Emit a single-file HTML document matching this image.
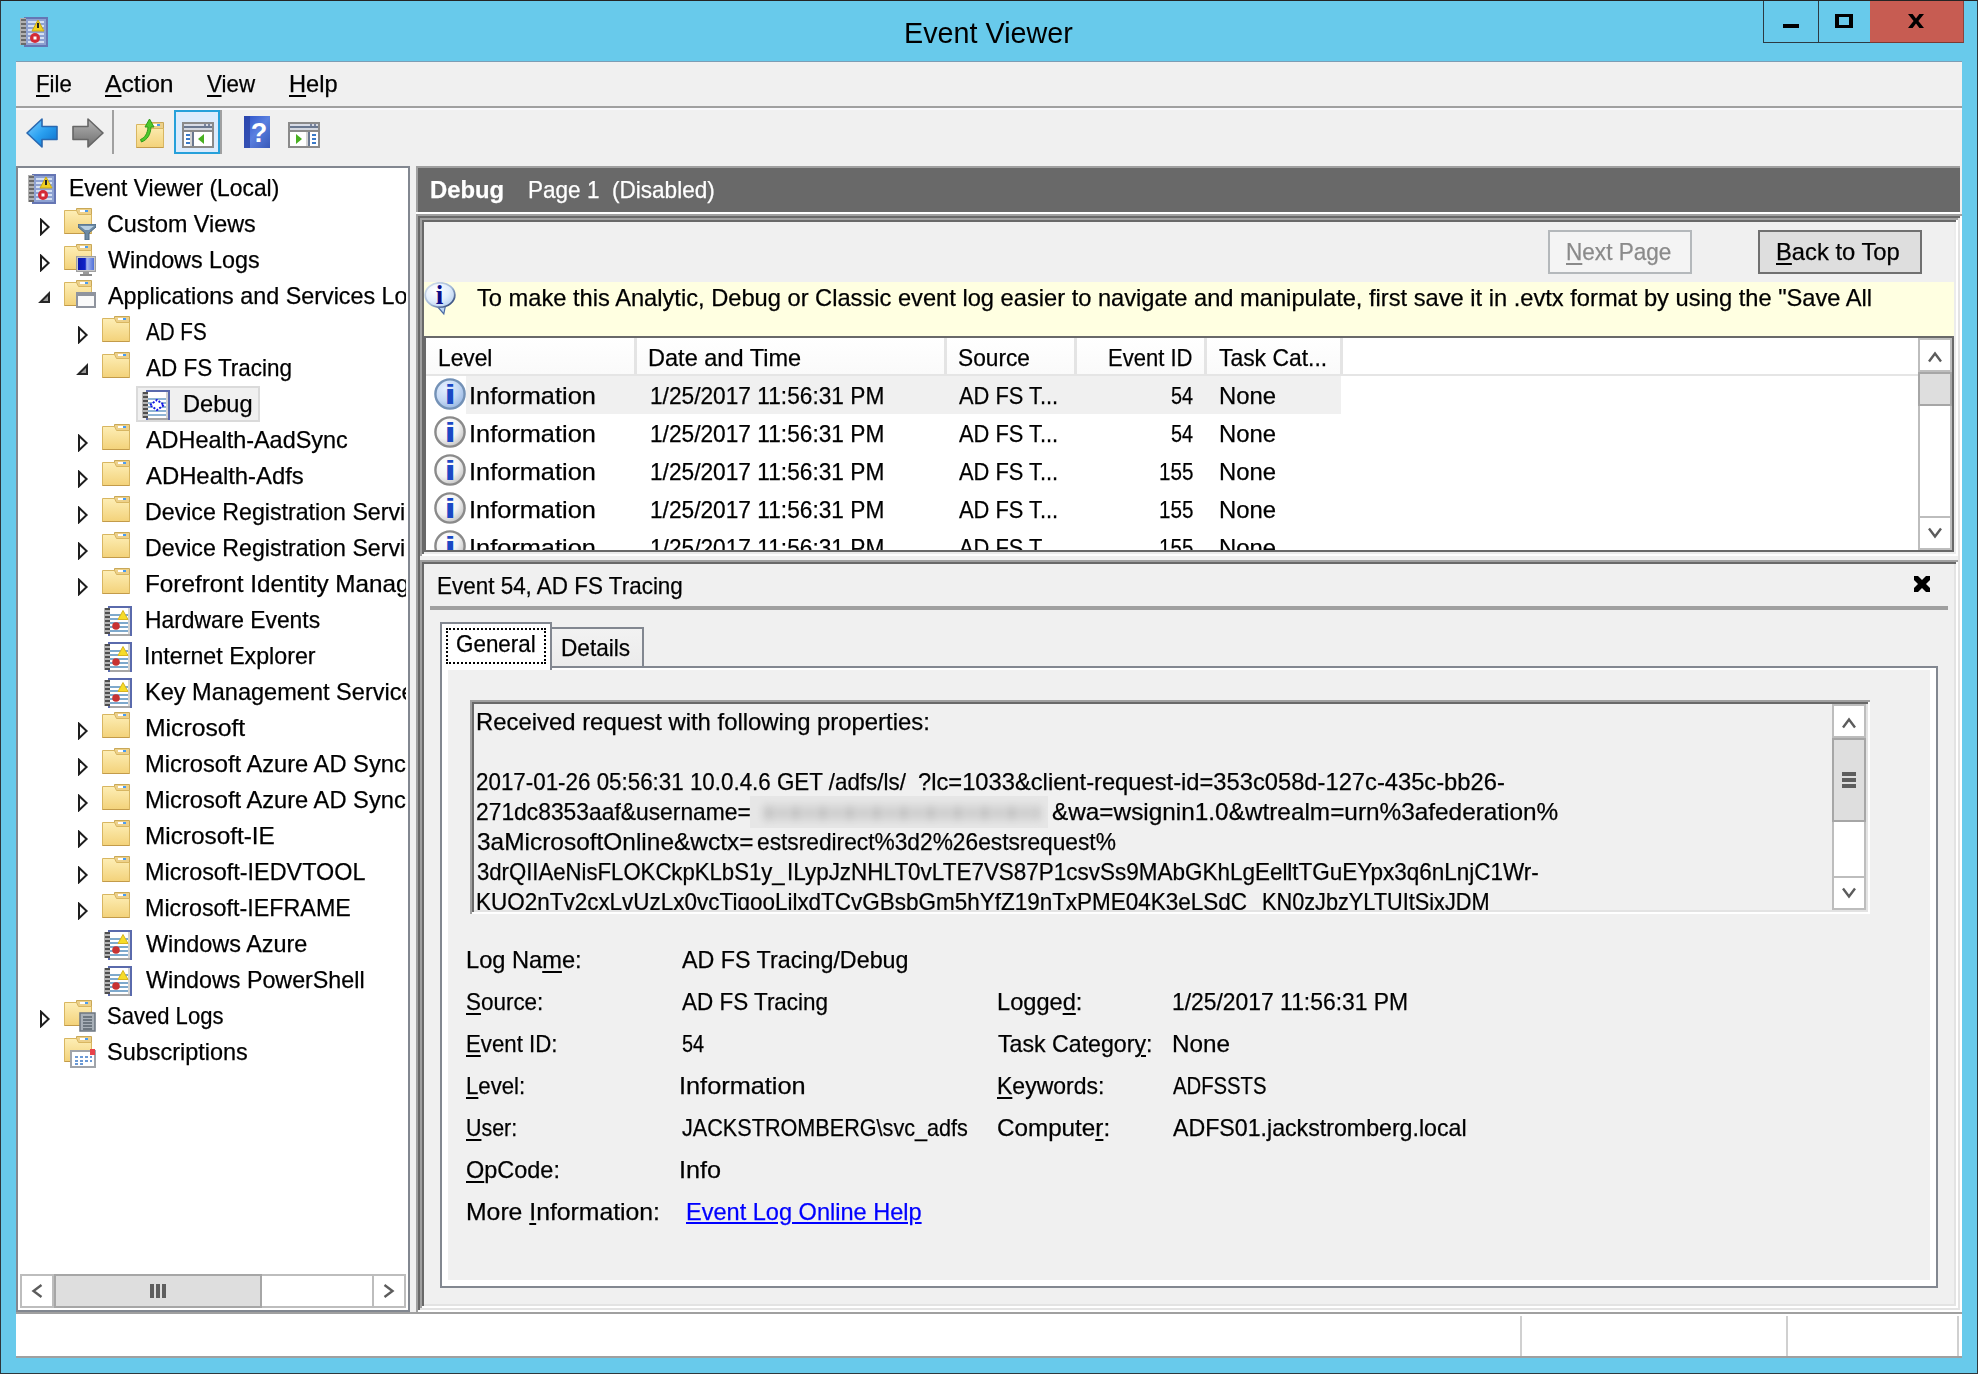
<!DOCTYPE html>
<html lang="en"><head><meta charset="utf-8"><title>Event Viewer</title>
<style>
html,body{margin:0;padding:0}
body{width:1978px;height:1374px;position:relative;overflow:hidden;background:#68caeb;font-family:"Liberation Sans", sans-serif;}
body div,body span.t,body svg{position:absolute;box-sizing:border-box}
span.t{white-space:pre;transform-origin:0 0;color:#000;-webkit-text-stroke:0.25px currentColor}
u{text-decoration:underline;text-decoration-thickness:2px;text-underline-offset:2.5px}
</style></head>
<body>
<svg width="0" height="0" style="left:0;top:0"><linearGradient id="gf" x1="0" y1="0" x2="0" y2="1"><stop offset="0" stop-color="#fdeeb6"/><stop offset="1" stop-color="#f3d27a"/></linearGradient>
<linearGradient id="gb" x1="0" y1="0" x2="1" y2="1"><stop offset="0" stop-color="#7fd0ff"/><stop offset="0.5" stop-color="#2aa0f0"/><stop offset="1" stop-color="#0a6cc8"/></linearGradient>
<linearGradient id="gg" x1="0" y1="0" x2="0" y2="1"><stop offset="0" stop-color="#b4b4b4"/><stop offset="1" stop-color="#6e6e6e"/></linearGradient>
<radialGradient id="gi" cx="0.35" cy="0.3" r="0.8"><stop offset="0" stop-color="#ffffff"/><stop offset="0.55" stop-color="#f2f2f2"/><stop offset="1" stop-color="#bdbdbd"/></radialGradient>
<radialGradient id="gis" cx="0.35" cy="0.3" r="0.8"><stop offset="0" stop-color="#e4efff"/><stop offset="0.55" stop-color="#c4d8f4"/><stop offset="1" stop-color="#8fb0de"/></radialGradient>
<linearGradient id="gh" x1="0" y1="0" x2="1" y2="1"><stop offset="0" stop-color="#2a50c8"/><stop offset="0.5" stop-color="#5a80e0"/><stop offset="1" stop-color="#3858b8"/></linearGradient>
<linearGradient id="gm" x1="0" y1="0" x2="1" y2="0"><stop offset="0" stop-color="#0a18b0"/><stop offset="0.45" stop-color="#1024c8"/><stop offset="0.55" stop-color="#a8b8f0"/><stop offset="1" stop-color="#5070d8"/></linearGradient></svg>
<div style="left:0;top:0;width:1978px;height:1374px;border:1px solid #2d373c;border-top-color:#242424"></div>
<div style="left:16px;top:61px;width:1946px;height:1px;background:#7d9db4;"></div>
<div style="left:16px;top:62px;width:1946px;height:1296px;background:#f0f0f0;"></div>
<svg style="left:20px;top:17px;" width="28" height="30" viewBox="0 0 28 30"><rect x="4" y="0" width="24" height="30" fill="#6576b4"/><rect x="6" y="2" width="20" height="26" fill="#8ea2d2"/>
<path d="M8 5h16M8 9h16M8 13h16M8 17h16M8 21h16M8 25h16" stroke="#d4e0f2" stroke-width="2"/>
<path d="M0 1h6v27h-6z" fill="#b0b0b0"/><path d="M1 3h5M1 7h5M1 11h5M1 15h5M1 19h5M1 23h5M1 27h5" stroke="#6a6a6a" stroke-width="2"/>
<path d="M18 3l-6 11h12z" fill="#f0d020" stroke="#c8a818"/><rect x="17" y="6" width="2" height="5" fill="#222"/>
<circle cx="15" cy="21" r="5" fill="#d42a36"/><rect x="13.5" y="19.5" width="3" height="3" fill="#fff"/></svg>
<div style="left:1763px;top:1px;width:56px;height:42px;border-left:1px solid #2c3a42;border-bottom:1px solid #2c3a42;border-right:1px solid #2c3a42;"></div>
<div style="left:1818px;top:1px;width:52px;height:42px;border-bottom:1px solid #2c3a42;"></div>
<div style="left:1870px;top:1px;width:94px;height:42px;background:#c75c52;border-bottom:1px solid #7a3a33;border-right:1px solid #8a443c;"></div>
<div style="left:1783px;top:24px;width:16px;height:4px;background:#000;"></div>
<div style="left:1835px;top:14px;width:18px;height:14px;border:3px solid #000;border-left-width:4px;border-right-width:4px;"></div>
<svg style="left:1908px;top:14px;" width="16" height="14" viewBox="0 0 16 14"><path d="M0 0h4.600L8 4.500 11.400 0H16l-5.600 7 5.600 7h-4.600L8 9.500 4.600 14H0l5.600-7z" fill="#000"/></svg>
<div style="left:16px;top:106px;width:1946px;height:2px;background:#a0a0a0;"></div>
<div style="left:16px;top:108px;width:1946px;height:2px;background:#f9f9fc;"></div>
<svg style="left:26px;top:118px;" width="32" height="30" viewBox="0 0 32 30"><path d="M1 15L16 1v7.5h15v13H16V29z" fill="url(#gb)" stroke="#2a68b0" stroke-width="1.6" stroke-linejoin="round"/></svg>
<svg style="left:72px;top:118px;" width="32" height="30" viewBox="0 0 32 30"><path d="M31 15L16 1v7.5H1v13h15V29z" fill="url(#gg)" stroke="#666" stroke-width="1.6" stroke-linejoin="round"/></svg>
<div style="left:112px;top:110px;width:2px;height:44px;background:#a0a0a0;"></div>
<svg style="left:136px;top:118px;" width="28" height="30" viewBox="0 0 28 30"><g transform="translate(0,4)"><path d="M12.5 0.5h15v7h-15z" fill="#ecd08a" stroke="#c9a857"/><rect x="16" y="2" width="5" height="2" fill="#fff"/><rect x="21" y="2" width="3" height="2" fill="#4a9cf0"/>
<path d="M0.5 2.5h12l2 4h13v19h-27z" fill="url(#gf)" stroke="#d8b661"/><path d="M0.5 25.5h27" stroke="#c39b4a"/></g><path d="M4.500 21.500c4.500-2 7-6 7.500-12.500h-3L13.500 1 18 9h-3c-.5 8-3.500 12.500-9.500 15z" fill="#4cc82c" stroke="#2f9a1a" stroke-width="1"/></svg>
<div style="left:174px;top:110px;width:46px;height:44px;background:#dcebfc;border:2px solid #26a0da;"></div>
<div style="left:220px;top:110px;width:2px;height:44px;background:#a0a0a0;"></div>
<svg style="left:182px;top:122px;" width="32" height="26" viewBox="0 0 32 26"><rect x="1" y="1" width="30" height="24" fill="#fff" stroke="#8a8a8a" stroke-width="2"/><rect x="2" y="2" width="28" height="2" fill="#d8dce6"/><rect x="22" y="2" width="2" height="2" fill="#7a86a0"/><rect x="26" y="2" width="2" height="2" fill="#7a86a0"/><rect x="2" y="4" width="28" height="2" fill="#6a7890"/><rect x="2" y="6" width="28" height="2" fill="#d4d8e0"/><rect x="2" y="8" width="28" height="2" fill="#8a8a8a"/><rect x="4" y="12" width="4" height="2" fill="#3a7ac8"/><rect x="4" y="16" width="4" height="2" fill="#3a7ac8"/><rect x="4" y="20" width="4" height="2" fill="#3a7ac8"/><rect x="8" y="10" width="2" height="14" fill="#d4d4d4"/><rect x="10" y="10" width="2" height="14" fill="#6a7890"/><path d="M22 12v10l-6-5z" fill="#48b020"/></svg>
<svg style="left:244px;top:116px;" width="26" height="32" viewBox="0 0 26 32"><rect width="26" height="32" fill="url(#gh)"/><rect x="0" y="0" width="6" height="32" fill="#2a44a8" opacity="0.8"/><text x="15" y="26" text-anchor="middle" font-family="Liberation Sans, sans-serif" font-weight="bold" font-size="27" fill="#fff">?</text></svg>
<svg style="left:288px;top:122px;" width="32" height="26" viewBox="0 0 32 26"><rect x="1" y="1" width="30" height="24" fill="#fff" stroke="#8a8a8a" stroke-width="2"/><rect x="2" y="2" width="28" height="2" fill="#d8dce6"/><rect x="22" y="2" width="2" height="2" fill="#7a86a0"/><rect x="26" y="2" width="2" height="2" fill="#7a86a0"/><rect x="2" y="4" width="28" height="2" fill="#6a7890"/><rect x="2" y="6" width="28" height="2" fill="#d4d8e0"/><rect x="2" y="8" width="28" height="2" fill="#8a8a8a"/><rect x="24" y="12" width="4" height="2" fill="#3a7ac8"/><rect x="24" y="16" width="4" height="2" fill="#3a7ac8"/><rect x="24" y="20" width="4" height="2" fill="#3a7ac8"/><rect x="18" y="10" width="2" height="14" fill="#d4d4d4"/><rect x="20" y="10" width="2" height="14" fill="#6a7890"/><path d="M8 12v10l6-5z" fill="#48b020"/></svg>
<div style="left:16px;top:166px;width:394px;height:1146px;background:#fff;border:2px solid #828790;"></div>
<div style="left:136px;top:386px;width:124px;height:36px;background:#f0f0f0;border:2px solid #dadada;"></div>
<svg style="left:28px;top:174px;" width="28" height="30" viewBox="0 0 28 30"><rect x="4" y="0" width="24" height="30" fill="#6576b4"/><rect x="6" y="2" width="20" height="26" fill="#8ea2d2"/>
<path d="M8 5h16M8 9h16M8 13h16M8 17h16M8 21h16M8 25h16" stroke="#d4e0f2" stroke-width="2"/>
<path d="M0 1h6v27h-6z" fill="#b0b0b0"/><path d="M1 3h5M1 7h5M1 11h5M1 15h5M1 19h5M1 23h5M1 27h5" stroke="#6a6a6a" stroke-width="2"/>
<path d="M18 3l-6 11h12z" fill="#f0d020" stroke="#c8a818"/><rect x="17" y="6" width="2" height="5" fill="#222"/>
<circle cx="15" cy="21" r="5" fill="#d42a36"/><rect x="13.5" y="19.5" width="3" height="3" fill="#fff"/></svg>
<svg style="left:64px;top:208px;" width="28" height="26" viewBox="0 0 28 26"><path d="M12.5 0.5h15v7h-15z" fill="#ecd08a" stroke="#c9a857"/><rect x="16" y="2" width="5" height="2" fill="#fff"/><rect x="21" y="2" width="3" height="2" fill="#4a9cf0"/>
<path d="M0.5 2.5h12l2 4h13v19h-27z" fill="url(#gf)" stroke="#d8b661"/><path d="M0.5 25.5h27" stroke="#c39b4a"/></svg>
<svg style="left:40px;top:218px;" width="11" height="18" viewBox="0 0 11 18"><path d="M1 1.8l7.6 7.2-7.6 7.200z" fill="#fff" stroke="#1e1e1e" stroke-width="2" stroke-linejoin="miter"/></svg>
<svg style="left:64px;top:244px;" width="28" height="26" viewBox="0 0 28 26"><path d="M12.5 0.5h15v7h-15z" fill="#ecd08a" stroke="#c9a857"/><rect x="16" y="2" width="5" height="2" fill="#fff"/><rect x="21" y="2" width="3" height="2" fill="#4a9cf0"/>
<path d="M0.5 2.5h12l2 4h13v19h-27z" fill="url(#gf)" stroke="#d8b661"/><path d="M0.5 25.5h27" stroke="#c39b4a"/></svg>
<svg style="left:40px;top:254px;" width="11" height="18" viewBox="0 0 11 18"><path d="M1 1.8l7.6 7.2-7.6 7.200z" fill="#fff" stroke="#1e1e1e" stroke-width="2" stroke-linejoin="miter"/></svg>
<svg style="left:64px;top:280px;" width="28" height="26" viewBox="0 0 28 26"><path d="M12.5 0.5h15v7h-15z" fill="#ecd08a" stroke="#c9a857"/><rect x="16" y="2" width="5" height="2" fill="#fff"/><rect x="21" y="2" width="3" height="2" fill="#4a9cf0"/>
<path d="M0.5 2.5h12l2 4h13v19h-27z" fill="url(#gf)" stroke="#d8b661"/><path d="M0.5 25.5h27" stroke="#c39b4a"/></svg>
<svg style="left:38px;top:291px;" width="12" height="12" viewBox="0 0 12 12"><path d="M11 2.500v8.500h-8.500z" fill="#9c9c9c" stroke="#262626" stroke-width="2"/></svg>
<svg style="left:102px;top:316px;" width="28" height="26" viewBox="0 0 28 26"><path d="M12.5 0.5h15v7h-15z" fill="#ecd08a" stroke="#c9a857"/><rect x="16" y="2" width="5" height="2" fill="#fff"/><rect x="21" y="2" width="3" height="2" fill="#4a9cf0"/>
<path d="M0.5 2.5h12l2 4h13v19h-27z" fill="url(#gf)" stroke="#d8b661"/><path d="M0.5 25.5h27" stroke="#c39b4a"/></svg>
<svg style="left:78px;top:326px;" width="11" height="18" viewBox="0 0 11 18"><path d="M1 1.8l7.6 7.2-7.6 7.200z" fill="#fff" stroke="#1e1e1e" stroke-width="2" stroke-linejoin="miter"/></svg>
<svg style="left:102px;top:352px;" width="28" height="26" viewBox="0 0 28 26"><path d="M12.5 0.5h15v7h-15z" fill="#ecd08a" stroke="#c9a857"/><rect x="16" y="2" width="5" height="2" fill="#fff"/><rect x="21" y="2" width="3" height="2" fill="#4a9cf0"/>
<path d="M0.5 2.5h12l2 4h13v19h-27z" fill="url(#gf)" stroke="#d8b661"/><path d="M0.5 25.5h27" stroke="#c39b4a"/></svg>
<svg style="left:76px;top:363px;" width="12" height="12" viewBox="0 0 12 12"><path d="M11 2.500v8.500h-8.500z" fill="#9c9c9c" stroke="#262626" stroke-width="2"/></svg>
<svg style="left:142px;top:390px;" width="28" height="30" viewBox="0 0 28 30"><rect x="4" y="0" width="24" height="30" fill="#5a6aac"/><rect x="6" y="2" width="22" height="28" fill="#a6a6a6"/><rect x="6" y="2" width="20" height="26" fill="#fff"/><rect x="24" y="2" width="2" height="26" fill="#d2d2d2"/><rect x="26" y="0" width="2" height="30" fill="#5a6aac"/>
<path d="M6 9h18M6 13h18M6 17h18M6 21h18M6 25h18" stroke="#8fb4d4" stroke-width="2"/>
<path d="M0 2h6v26h-6z" fill="#b4b4b4"/><path d="M1 3h5M1 7h5M1 11h5M1 15h5M1 19h5M1 23h5M1 27h5" stroke="#4e4e4e" stroke-width="2"/>
<path d="M8 15l7-5 7 5-7 5z" fill="#fff" stroke="#1414e6" stroke-width="2" stroke-dasharray="2 1.5"/></svg>
<svg style="left:102px;top:424px;" width="28" height="26" viewBox="0 0 28 26"><path d="M12.5 0.5h15v7h-15z" fill="#ecd08a" stroke="#c9a857"/><rect x="16" y="2" width="5" height="2" fill="#fff"/><rect x="21" y="2" width="3" height="2" fill="#4a9cf0"/>
<path d="M0.5 2.5h12l2 4h13v19h-27z" fill="url(#gf)" stroke="#d8b661"/><path d="M0.5 25.5h27" stroke="#c39b4a"/></svg>
<svg style="left:78px;top:434px;" width="11" height="18" viewBox="0 0 11 18"><path d="M1 1.8l7.6 7.2-7.6 7.200z" fill="#fff" stroke="#1e1e1e" stroke-width="2" stroke-linejoin="miter"/></svg>
<svg style="left:102px;top:460px;" width="28" height="26" viewBox="0 0 28 26"><path d="M12.5 0.5h15v7h-15z" fill="#ecd08a" stroke="#c9a857"/><rect x="16" y="2" width="5" height="2" fill="#fff"/><rect x="21" y="2" width="3" height="2" fill="#4a9cf0"/>
<path d="M0.5 2.5h12l2 4h13v19h-27z" fill="url(#gf)" stroke="#d8b661"/><path d="M0.5 25.5h27" stroke="#c39b4a"/></svg>
<svg style="left:78px;top:470px;" width="11" height="18" viewBox="0 0 11 18"><path d="M1 1.8l7.6 7.2-7.6 7.200z" fill="#fff" stroke="#1e1e1e" stroke-width="2" stroke-linejoin="miter"/></svg>
<svg style="left:102px;top:496px;" width="28" height="26" viewBox="0 0 28 26"><path d="M12.5 0.5h15v7h-15z" fill="#ecd08a" stroke="#c9a857"/><rect x="16" y="2" width="5" height="2" fill="#fff"/><rect x="21" y="2" width="3" height="2" fill="#4a9cf0"/>
<path d="M0.5 2.5h12l2 4h13v19h-27z" fill="url(#gf)" stroke="#d8b661"/><path d="M0.5 25.5h27" stroke="#c39b4a"/></svg>
<svg style="left:78px;top:506px;" width="11" height="18" viewBox="0 0 11 18"><path d="M1 1.8l7.6 7.2-7.6 7.200z" fill="#fff" stroke="#1e1e1e" stroke-width="2" stroke-linejoin="miter"/></svg>
<svg style="left:102px;top:532px;" width="28" height="26" viewBox="0 0 28 26"><path d="M12.5 0.5h15v7h-15z" fill="#ecd08a" stroke="#c9a857"/><rect x="16" y="2" width="5" height="2" fill="#fff"/><rect x="21" y="2" width="3" height="2" fill="#4a9cf0"/>
<path d="M0.5 2.5h12l2 4h13v19h-27z" fill="url(#gf)" stroke="#d8b661"/><path d="M0.5 25.5h27" stroke="#c39b4a"/></svg>
<svg style="left:78px;top:542px;" width="11" height="18" viewBox="0 0 11 18"><path d="M1 1.8l7.6 7.2-7.6 7.200z" fill="#fff" stroke="#1e1e1e" stroke-width="2" stroke-linejoin="miter"/></svg>
<svg style="left:102px;top:568px;" width="28" height="26" viewBox="0 0 28 26"><path d="M12.5 0.5h15v7h-15z" fill="#ecd08a" stroke="#c9a857"/><rect x="16" y="2" width="5" height="2" fill="#fff"/><rect x="21" y="2" width="3" height="2" fill="#4a9cf0"/>
<path d="M0.5 2.5h12l2 4h13v19h-27z" fill="url(#gf)" stroke="#d8b661"/><path d="M0.5 25.5h27" stroke="#c39b4a"/></svg>
<svg style="left:78px;top:578px;" width="11" height="18" viewBox="0 0 11 18"><path d="M1 1.8l7.6 7.2-7.6 7.200z" fill="#fff" stroke="#1e1e1e" stroke-width="2" stroke-linejoin="miter"/></svg>
<svg style="left:104px;top:606px;" width="28" height="30" viewBox="0 0 28 30"><rect x="4" y="0" width="24" height="30" fill="#5a6aac"/><rect x="6" y="2" width="22" height="28" fill="#a6a6a6"/><rect x="6" y="2" width="20" height="26" fill="#fff"/><rect x="24" y="2" width="2" height="26" fill="#d2d2d2"/><rect x="26" y="0" width="2" height="30" fill="#5a6aac"/>
<path d="M6 9h18M6 13h18M6 17h18M6 21h18M6 25h18" stroke="#7ea9cc" stroke-width="2"/>
<path d="M0 2h6v26h-6z" fill="#b4b4b4"/><path d="M1 3h5M1 7h5M1 11h5M1 15h5M1 19h5M1 23h5M1 27h5" stroke="#4e4e4e" stroke-width="2"/>
<path d="M19 4.500l-5 9h10z" fill="#f6dc28" stroke="#d8b41e"/><circle cx="12" cy="20" r="3.800" fill="#c83232"/></svg>
<svg style="left:104px;top:642px;" width="28" height="30" viewBox="0 0 28 30"><rect x="4" y="0" width="24" height="30" fill="#5a6aac"/><rect x="6" y="2" width="22" height="28" fill="#a6a6a6"/><rect x="6" y="2" width="20" height="26" fill="#fff"/><rect x="24" y="2" width="2" height="26" fill="#d2d2d2"/><rect x="26" y="0" width="2" height="30" fill="#5a6aac"/>
<path d="M6 9h18M6 13h18M6 17h18M6 21h18M6 25h18" stroke="#7ea9cc" stroke-width="2"/>
<path d="M0 2h6v26h-6z" fill="#b4b4b4"/><path d="M1 3h5M1 7h5M1 11h5M1 15h5M1 19h5M1 23h5M1 27h5" stroke="#4e4e4e" stroke-width="2"/>
<path d="M19 4.500l-5 9h10z" fill="#f6dc28" stroke="#d8b41e"/><circle cx="12" cy="20" r="3.800" fill="#c83232"/></svg>
<svg style="left:104px;top:678px;" width="28" height="30" viewBox="0 0 28 30"><rect x="4" y="0" width="24" height="30" fill="#5a6aac"/><rect x="6" y="2" width="22" height="28" fill="#a6a6a6"/><rect x="6" y="2" width="20" height="26" fill="#fff"/><rect x="24" y="2" width="2" height="26" fill="#d2d2d2"/><rect x="26" y="0" width="2" height="30" fill="#5a6aac"/>
<path d="M6 9h18M6 13h18M6 17h18M6 21h18M6 25h18" stroke="#7ea9cc" stroke-width="2"/>
<path d="M0 2h6v26h-6z" fill="#b4b4b4"/><path d="M1 3h5M1 7h5M1 11h5M1 15h5M1 19h5M1 23h5M1 27h5" stroke="#4e4e4e" stroke-width="2"/>
<path d="M19 4.500l-5 9h10z" fill="#f6dc28" stroke="#d8b41e"/><circle cx="12" cy="20" r="3.800" fill="#c83232"/></svg>
<svg style="left:102px;top:712px;" width="28" height="26" viewBox="0 0 28 26"><path d="M12.5 0.5h15v7h-15z" fill="#ecd08a" stroke="#c9a857"/><rect x="16" y="2" width="5" height="2" fill="#fff"/><rect x="21" y="2" width="3" height="2" fill="#4a9cf0"/>
<path d="M0.5 2.5h12l2 4h13v19h-27z" fill="url(#gf)" stroke="#d8b661"/><path d="M0.5 25.5h27" stroke="#c39b4a"/></svg>
<svg style="left:78px;top:722px;" width="11" height="18" viewBox="0 0 11 18"><path d="M1 1.8l7.6 7.2-7.6 7.200z" fill="#fff" stroke="#1e1e1e" stroke-width="2" stroke-linejoin="miter"/></svg>
<svg style="left:102px;top:748px;" width="28" height="26" viewBox="0 0 28 26"><path d="M12.5 0.5h15v7h-15z" fill="#ecd08a" stroke="#c9a857"/><rect x="16" y="2" width="5" height="2" fill="#fff"/><rect x="21" y="2" width="3" height="2" fill="#4a9cf0"/>
<path d="M0.5 2.5h12l2 4h13v19h-27z" fill="url(#gf)" stroke="#d8b661"/><path d="M0.5 25.5h27" stroke="#c39b4a"/></svg>
<svg style="left:78px;top:758px;" width="11" height="18" viewBox="0 0 11 18"><path d="M1 1.8l7.6 7.2-7.6 7.200z" fill="#fff" stroke="#1e1e1e" stroke-width="2" stroke-linejoin="miter"/></svg>
<svg style="left:102px;top:784px;" width="28" height="26" viewBox="0 0 28 26"><path d="M12.5 0.5h15v7h-15z" fill="#ecd08a" stroke="#c9a857"/><rect x="16" y="2" width="5" height="2" fill="#fff"/><rect x="21" y="2" width="3" height="2" fill="#4a9cf0"/>
<path d="M0.5 2.5h12l2 4h13v19h-27z" fill="url(#gf)" stroke="#d8b661"/><path d="M0.5 25.5h27" stroke="#c39b4a"/></svg>
<svg style="left:78px;top:794px;" width="11" height="18" viewBox="0 0 11 18"><path d="M1 1.8l7.6 7.2-7.6 7.200z" fill="#fff" stroke="#1e1e1e" stroke-width="2" stroke-linejoin="miter"/></svg>
<svg style="left:102px;top:820px;" width="28" height="26" viewBox="0 0 28 26"><path d="M12.5 0.5h15v7h-15z" fill="#ecd08a" stroke="#c9a857"/><rect x="16" y="2" width="5" height="2" fill="#fff"/><rect x="21" y="2" width="3" height="2" fill="#4a9cf0"/>
<path d="M0.5 2.5h12l2 4h13v19h-27z" fill="url(#gf)" stroke="#d8b661"/><path d="M0.5 25.5h27" stroke="#c39b4a"/></svg>
<svg style="left:78px;top:830px;" width="11" height="18" viewBox="0 0 11 18"><path d="M1 1.8l7.6 7.2-7.6 7.200z" fill="#fff" stroke="#1e1e1e" stroke-width="2" stroke-linejoin="miter"/></svg>
<svg style="left:102px;top:856px;" width="28" height="26" viewBox="0 0 28 26"><path d="M12.5 0.5h15v7h-15z" fill="#ecd08a" stroke="#c9a857"/><rect x="16" y="2" width="5" height="2" fill="#fff"/><rect x="21" y="2" width="3" height="2" fill="#4a9cf0"/>
<path d="M0.5 2.5h12l2 4h13v19h-27z" fill="url(#gf)" stroke="#d8b661"/><path d="M0.5 25.5h27" stroke="#c39b4a"/></svg>
<svg style="left:78px;top:866px;" width="11" height="18" viewBox="0 0 11 18"><path d="M1 1.8l7.6 7.2-7.6 7.200z" fill="#fff" stroke="#1e1e1e" stroke-width="2" stroke-linejoin="miter"/></svg>
<svg style="left:102px;top:892px;" width="28" height="26" viewBox="0 0 28 26"><path d="M12.5 0.5h15v7h-15z" fill="#ecd08a" stroke="#c9a857"/><rect x="16" y="2" width="5" height="2" fill="#fff"/><rect x="21" y="2" width="3" height="2" fill="#4a9cf0"/>
<path d="M0.5 2.5h12l2 4h13v19h-27z" fill="url(#gf)" stroke="#d8b661"/><path d="M0.5 25.5h27" stroke="#c39b4a"/></svg>
<svg style="left:78px;top:902px;" width="11" height="18" viewBox="0 0 11 18"><path d="M1 1.8l7.6 7.2-7.6 7.200z" fill="#fff" stroke="#1e1e1e" stroke-width="2" stroke-linejoin="miter"/></svg>
<svg style="left:104px;top:930px;" width="28" height="30" viewBox="0 0 28 30"><rect x="4" y="0" width="24" height="30" fill="#5a6aac"/><rect x="6" y="2" width="22" height="28" fill="#a6a6a6"/><rect x="6" y="2" width="20" height="26" fill="#fff"/><rect x="24" y="2" width="2" height="26" fill="#d2d2d2"/><rect x="26" y="0" width="2" height="30" fill="#5a6aac"/>
<path d="M6 9h18M6 13h18M6 17h18M6 21h18M6 25h18" stroke="#7ea9cc" stroke-width="2"/>
<path d="M0 2h6v26h-6z" fill="#b4b4b4"/><path d="M1 3h5M1 7h5M1 11h5M1 15h5M1 19h5M1 23h5M1 27h5" stroke="#4e4e4e" stroke-width="2"/>
<path d="M19 4.500l-5 9h10z" fill="#f6dc28" stroke="#d8b41e"/><circle cx="12" cy="20" r="3.800" fill="#c83232"/></svg>
<svg style="left:104px;top:966px;" width="28" height="30" viewBox="0 0 28 30"><rect x="4" y="0" width="24" height="30" fill="#5a6aac"/><rect x="6" y="2" width="22" height="28" fill="#a6a6a6"/><rect x="6" y="2" width="20" height="26" fill="#fff"/><rect x="24" y="2" width="2" height="26" fill="#d2d2d2"/><rect x="26" y="0" width="2" height="30" fill="#5a6aac"/>
<path d="M6 9h18M6 13h18M6 17h18M6 21h18M6 25h18" stroke="#7ea9cc" stroke-width="2"/>
<path d="M0 2h6v26h-6z" fill="#b4b4b4"/><path d="M1 3h5M1 7h5M1 11h5M1 15h5M1 19h5M1 23h5M1 27h5" stroke="#4e4e4e" stroke-width="2"/>
<path d="M19 4.500l-5 9h10z" fill="#f6dc28" stroke="#d8b41e"/><circle cx="12" cy="20" r="3.800" fill="#c83232"/></svg>
<svg style="left:64px;top:1000px;" width="28" height="26" viewBox="0 0 28 26"><path d="M12.5 0.5h15v7h-15z" fill="#ecd08a" stroke="#c9a857"/><rect x="16" y="2" width="5" height="2" fill="#fff"/><rect x="21" y="2" width="3" height="2" fill="#4a9cf0"/>
<path d="M0.5 2.5h12l2 4h13v19h-27z" fill="url(#gf)" stroke="#d8b661"/><path d="M0.5 25.5h27" stroke="#c39b4a"/></svg>
<svg style="left:40px;top:1010px;" width="11" height="18" viewBox="0 0 11 18"><path d="M1 1.8l7.6 7.2-7.6 7.200z" fill="#fff" stroke="#1e1e1e" stroke-width="2" stroke-linejoin="miter"/></svg>
<svg style="left:64px;top:1036px;" width="28" height="26" viewBox="0 0 28 26"><path d="M12.5 0.5h15v7h-15z" fill="#ecd08a" stroke="#c9a857"/><rect x="16" y="2" width="5" height="2" fill="#fff"/><rect x="21" y="2" width="3" height="2" fill="#4a9cf0"/>
<path d="M0.5 2.5h12l2 4h13v19h-27z" fill="url(#gf)" stroke="#d8b661"/><path d="M0.5 25.5h27" stroke="#c39b4a"/></svg>
<svg style="left:78px;top:224px;" width="18" height="16" viewBox="0 0 18 16"><path d="M0 0h18v3l-7 6v7h-4v-7l-7-6z" fill="#6c8aa4" stroke="#4f6b84" stroke-width="1"/><path d="M2 2h14l-5 4h-4z" fill="#b8d0e4"/></svg>
<svg style="left:76px;top:256px;" width="20" height="20" viewBox="0 0 20 20"><rect x="0.5" y="0.5" width="19" height="15" fill="#c8c8c8" stroke="#a0a0a0"/><rect x="2" y="2" width="16" height="12" fill="url(#gm)"/><rect x="7" y="16" width="6" height="2" fill="#9a9a9a"/><rect x="4" y="18" width="12" height="2" fill="#8a8a8a"/></svg>
<svg style="left:76px;top:292px;" width="20" height="16" viewBox="0 0 20 16"><rect x="1" y="1" width="18" height="14" fill="#fafafa" stroke="#8f949e" stroke-width="2"/><rect x="2" y="2" width="16" height="2" fill="#8f949e"/></svg>
<svg style="left:73px;top:1012px;" width="24" height="20" viewBox="0 0 24 20"><rect x="7" y="1" width="15" height="18" fill="#a8b0b8" stroke="#6c7680" stroke-width="1.5"/><path d="M10 5h9M10 8h9M10 11h9M10 14h9M10 17h9" stroke="#5a646e" stroke-width="1.4"/></svg>
<svg style="left:70px;top:1048px;" width="26" height="20" viewBox="0 0 26 20"><rect x="1" y="3" width="24" height="16" fill="#fff" stroke="#a0a4aa" stroke-width="2"/><rect x="20" y="1" width="5" height="6" fill="#e8424a"/><path d="M5 9h3M10 9h3M15 9h3M20 9h2M5 13h3M10 13h3M15 13h3M20 13h2M5 16h3M10 16h3" stroke="#3a78c8" stroke-width="1.6"/></svg>
<div style="left:18px;top:1272px;width:390px;height:38px;background:#fff;"></div>
<div style="left:20px;top:1274px;width:386px;height:34px;background:#fff;border-top:2px solid #bdbdbd;border-bottom:2px solid #bdbdbd;"></div>
<div style="left:20px;top:1274px;width:34px;height:34px;background:#fff;border:2px solid #bdbdbd;"></div>
<div style="left:372px;top:1274px;width:34px;height:34px;background:#fff;border:2px solid #bdbdbd;"></div>
<div style="left:54px;top:1274px;width:208px;height:34px;background:#dedede;border:2px solid #a6a6a6;"></div>
<div style="left:150px;top:1284px;width:4px;height:14px;background:#5e5e5e;"></div>
<div style="left:156px;top:1284px;width:4px;height:14px;background:#5e5e5e;"></div>
<div style="left:162px;top:1284px;width:4px;height:14px;background:#5e5e5e;"></div>
<svg style="left:31px;top:1283px;" width="12" height="16" viewBox="0 0 12 16"><path d="M10.500 2L2.500 8l8 6" fill="none" stroke="#5c5c5c" stroke-width="2.4"/></svg>
<svg style="left:383px;top:1283px;" width="12" height="16" viewBox="0 0 12 16"><path d="M1.500 2L9.500 8l-8 6" fill="none" stroke="#5c5c5c" stroke-width="2.4"/></svg>
<div style="left:16px;top:1312px;width:1946px;height:2px;background:#a0a0a0;"></div>
<div style="left:16px;top:1314px;width:1946px;height:42px;background:#fff;"></div>
<div style="left:16px;top:1356px;width:1946px;height:2px;background:#a0a0a0;"></div>
<div style="left:1520px;top:1316px;width:2px;height:40px;background:#d0d0d0;"></div>
<div style="left:1786px;top:1316px;width:2px;height:40px;background:#d0d0d0;"></div>
<div style="left:1957px;top:1316px;width:2px;height:40px;background:#d0d0d0;"></div>
<div style="left:416px;top:166px;width:1544px;height:46px;background:#696969;border-top:2px solid #a0a0a0;border-left:2px solid #a0a0a0;"></div>
<div style="left:416px;top:212px;width:1544px;height:2px;background:#fff;"></div>
<div style="left:416px;top:214px;width:1546px;height:1098px;background:#a0a0a0;"></div>
<div style="left:418px;top:216px;width:1544px;height:1096px;background:#fff;"></div>
<div style="left:418px;top:216px;width:1542px;height:1094px;background:#696969;"></div>
<div style="left:420px;top:218px;width:1540px;height:1092px;background:#e3e3e3;"></div>
<div style="left:420px;top:218px;width:1538px;height:1090px;background:#f0f0f0;"></div>
<div style="left:420px;top:218px;width:1538px;height:338px;background:#a0a0a0;"></div>
<div style="left:422px;top:220px;width:1536px;height:336px;background:#fff;"></div>
<div style="left:422px;top:220px;width:1534px;height:334px;background:#696969;"></div>
<div style="left:424px;top:222px;width:1532px;height:332px;background:#ececec;"></div>
<div style="left:424px;top:222px;width:1530px;height:330px;background:#f0f0f0;"></div>
<div style="left:420px;top:560px;width:1538px;height:748px;background:#a0a0a0;"></div>
<div style="left:422px;top:562px;width:1536px;height:746px;background:#fff;"></div>
<div style="left:422px;top:562px;width:1534px;height:744px;background:#696969;"></div>
<div style="left:424px;top:564px;width:1532px;height:742px;background:#e3e3e3;"></div>
<div style="left:424px;top:564px;width:1530px;height:740px;background:#f0f0f0;"></div>
<div style="left:1548px;top:230px;width:144px;height:44px;background:#f4f4f4;border:2px solid #b4b8bb;"></div>
<div style="left:1758px;top:230px;width:164px;height:44px;background:#dedede;border:2px solid #707070;"></div>
<div style="left:424px;top:282px;width:1530px;height:54px;background:#ffffe1;"></div>
<svg style="left:424px;top:282px;" width="34" height="34" viewBox="0 0 34 34"><radialGradient id="gbb" cx="0.35" cy="0.3" r="0.9"><stop offset="0" stop-color="#ffffff"/><stop offset="0.5" stop-color="#e2eefc"/><stop offset="1" stop-color="#a4c4ec"/></radialGradient><linearGradient id="gbs" x1="0" y1="0" x2="1" y2="1"><stop offset="0" stop-color="#d8e2ee"/><stop offset="0.55" stop-color="#9fb6d6"/><stop offset="1" stop-color="#10285e"/></linearGradient><path d="M13 24L19.800 32l1.700-8.500z" fill="#bcd6f4" stroke="#4a6aa4" stroke-width="1.2"/><ellipse cx="16" cy="13" rx="14.8" ry="12.2" fill="url(#gbb)" stroke="url(#gbs)" stroke-width="1.8"/><text x="15.500" y="21.500" text-anchor="middle" font-family="Liberation Serif, serif" font-weight="bold" font-size="27" fill="#0a0a86">i</text></svg>
<div style="left:424px;top:336px;width:1530px;height:216px;background:#fff;border:2px solid #696969;"></div>
<div style="left:426px;top:338px;width:916px;height:36px;background:linear-gradient(#fff,#fafafa)"></div>
<div style="left:426px;top:374px;width:1492px;height:2px;background:#e5e5e5;"></div>
<div style="left:634px;top:338px;width:3px;height:36px;background:#e4e4e4;"></div>
<div style="left:944px;top:338px;width:3px;height:36px;background:#e4e4e4;"></div>
<div style="left:1074px;top:338px;width:3px;height:36px;background:#e4e4e4;"></div>
<div style="left:1204px;top:338px;width:3px;height:36px;background:#e4e4e4;"></div>
<div style="left:1340px;top:338px;width:3px;height:36px;background:#e4e4e4;"></div>
<div style="left:466px;top:376px;width:875px;height:38px;background:#f0f0f0;"></div>
<svg style="left:426px;top:376px" width="60" height="174" viewBox="0 0 60 174"><g transform="translate(8,2)"><circle cx="16" cy="16" r="14.6" fill="url(#gis)" stroke="#7391b6" stroke-width="2.4"/><text transform="translate(16.200,25.700) scale(1.55,1)" text-anchor="middle" font-family="Liberation Sans, sans-serif" font-weight="bold" font-size="27.5" fill="#1a48c4">i</text></g><g transform="translate(8,40)"><circle cx="16" cy="16" r="14.6" fill="url(#gi)" stroke="#8a8a8a" stroke-width="2.4"/><text transform="translate(16.200,25.700) scale(1.55,1)" text-anchor="middle" font-family="Liberation Sans, sans-serif" font-weight="bold" font-size="27.5" fill="#1a48c4">i</text></g><g transform="translate(8,78)"><circle cx="16" cy="16" r="14.6" fill="url(#gi)" stroke="#8a8a8a" stroke-width="2.4"/><text transform="translate(16.200,25.700) scale(1.55,1)" text-anchor="middle" font-family="Liberation Sans, sans-serif" font-weight="bold" font-size="27.5" fill="#1a48c4">i</text></g><g transform="translate(8,116)"><circle cx="16" cy="16" r="14.6" fill="url(#gi)" stroke="#8a8a8a" stroke-width="2.4"/><text transform="translate(16.200,25.700) scale(1.55,1)" text-anchor="middle" font-family="Liberation Sans, sans-serif" font-weight="bold" font-size="27.5" fill="#1a48c4">i</text></g><g transform="translate(8,154)"><circle cx="16" cy="16" r="14.6" fill="url(#gi)" stroke="#8a8a8a" stroke-width="2.4"/><text transform="translate(16.200,25.700) scale(1.55,1)" text-anchor="middle" font-family="Liberation Sans, sans-serif" font-weight="bold" font-size="27.5" fill="#1a48c4">i</text></g></svg>
<div style="left:1918px;top:338px;width:34px;height:212px;background:#fff;border-left:2px solid #bdbdbd;border-right:2px solid #bdbdbd;"></div>
<div style="left:1918px;top:338px;width:34px;height:34px;background:#fff;border:2px solid #bdbdbd;"></div>
<div style="left:1918px;top:372px;width:34px;height:34px;background:#dedede;border:2px solid #a6a6a6;"></div>
<div style="left:1918px;top:516px;width:34px;height:34px;background:#fff;border:2px solid #bdbdbd;"></div>
<svg style="left:1927px;top:351px;" width="16" height="12" viewBox="0 0 16 12"><path d="M2 10.500L8 2.500l6 8" fill="none" stroke="#5c5c5c" stroke-width="2.4"/></svg>
<svg style="left:1927px;top:527px;" width="16" height="12" viewBox="0 0 16 12"><path d="M2 1.500L8 9.500l6-8" fill="none" stroke="#5c5c5c" stroke-width="2.4"/></svg>
<svg style="left:1914px;top:576px;" width="16" height="16" viewBox="0 0 16 16"><path d="M0 0h4l4 4 4-4h4v4l-4 4 4 4v4h-4l-4-4-4 4H0v-4l4-4-4-4z" fill="#000"/></svg>
<div style="left:430px;top:606px;width:1518px;height:4px;background:#a0a0a0;"></div>
<div style="left:440px;top:666px;width:1498px;height:622px;background:#fff;border:2px solid #828790;"></div>
<div style="left:448px;top:670px;width:1482px;height:610px;background:#f0f0f0;"></div>
<div style="left:552px;top:627px;width:92px;height:39px;background:#f0f0f0;border:2px solid #828790;border-left:none;border-bottom:none;background:linear-gradient(#f2f2f2,#ebebeb);"></div>
<div style="left:440px;top:622px;width:112px;height:48px;background:#fff;border:2px solid #828790;border-bottom:none;"></div>
<div style="left:446px;top:628px;width:100px;height:36px;border:2px dotted #000;"></div>
<div style="left:470px;top:700px;width:1400px;height:214px;background:#a0a0a0;"></div>
<div style="left:472px;top:702px;width:1398px;height:212px;background:#fff;"></div>
<div style="left:472px;top:702px;width:1396px;height:210px;background:#696969;"></div>
<div style="left:474px;top:704px;width:1394px;height:208px;background:#e3e3e3;"></div>
<div style="left:474px;top:704px;width:1392px;height:206px;background:#f0f0f0;"></div>
<div style="left:750px;top:796px;width:298px;height:32px;background:#e6e6e6;overflow:hidden"><div style="left:14px;top:10px;width:276px;height:14px;background:repeating-linear-gradient(90deg,#bcbcbc 0 9px,#d6d6d6 9px 15px,#c6c6c6 15px 22px,#dadada 22px 27px);filter:blur(4px);opacity:.9"></div></div>
<div style="left:1832px;top:704px;width:34px;height:206px;background:#fff;border-left:2px solid #bdbdbd;border-right:2px solid #bdbdbd;"></div>
<div style="left:1832px;top:704px;width:34px;height:34px;background:#fff;border:2px solid #bdbdbd;"></div>
<div style="left:1832px;top:738px;width:34px;height:84px;background:#dedede;border:2px solid #a6a6a6;"></div>
<div style="left:1832px;top:876px;width:34px;height:34px;background:#fff;border:2px solid #bdbdbd;"></div>
<div style="left:1842px;top:772px;width:14px;height:4px;background:#5e5e5e;"></div>
<div style="left:1842px;top:778px;width:14px;height:4px;background:#5e5e5e;"></div>
<div style="left:1842px;top:784px;width:14px;height:4px;background:#5e5e5e;"></div>
<svg style="left:1841px;top:717px;" width="16" height="12" viewBox="0 0 16 12"><path d="M2 10.500L8 2.500l6 8" fill="none" stroke="#5c5c5c" stroke-width="2.4"/></svg>
<svg style="left:1841px;top:887px;" width="16" height="12" viewBox="0 0 16 12"><path d="M2 1.500L8 9.500l6-8" fill="none" stroke="#5c5c5c" stroke-width="2.4"/></svg>
<span class="t" style="left:904.2px;top:14.0px;font-size:30px;line-height:38px;transform:scaleX(0.9580);-webkit-text-stroke:0;">Event Viewer</span>
<span class="t" style="left:35.9px;top:69.1px;font-size:24px;line-height:30px;transform:scaleX(0.9270);"><u>F</u>ile</span>
<span class="t" style="left:105.1px;top:69.1px;font-size:24px;line-height:30px;transform:scaleX(1.0282);"><u>A</u>ction</span>
<span class="t" style="left:206.6px;top:69.1px;font-size:24px;line-height:30px;transform:scaleX(0.9320);"><u>V</u>iew</span>
<span class="t" style="left:288.5px;top:69.1px;font-size:24px;line-height:30px;transform:scaleX(0.9831);"><u>H</u>elp</span>
<span class="t" style="left:68.8px;top:173.2px;font-size:24px;line-height:30px;transform:scaleX(0.9516);">Event Viewer (Local)</span>
<span class="t" style="left:106.7px;top:209.2px;font-size:24px;line-height:30px;transform:scaleX(0.9721);">Custom Views</span>
<span class="t" style="left:107.7px;top:245.2px;font-size:24px;line-height:30px;transform:scaleX(0.9720);">Windows Logs</span>
<div style="left:18px;top:168px;width:388px;height:1104px;overflow:hidden"><span class="t" style="left:89.7px;top:113.2px;font-size:24px;line-height:30px;transform:scaleX(0.9720);">Applications and Services Logs</span></div>
<span class="t" style="left:145.6px;top:317.2px;font-size:24px;line-height:30px;transform:scaleX(0.8584);">AD FS</span>
<span class="t" style="left:145.6px;top:353.2px;font-size:24px;line-height:30px;transform:scaleX(0.9353);">AD FS Tracing</span>
<span class="t" style="left:182.8px;top:389.2px;font-size:24px;line-height:30px;transform:scaleX(0.9843);">Debug</span>
<span class="t" style="left:145.6px;top:425.2px;font-size:24px;line-height:30px;transform:scaleX(0.9755);">ADHealth-AadSync</span>
<span class="t" style="left:145.6px;top:461.2px;font-size:24px;line-height:30px;transform:scaleX(0.9941);">ADHealth-Adfs</span>
<div style="left:18px;top:168px;width:388px;height:1104px;overflow:hidden"><span class="t" style="left:126.6px;top:329.2px;font-size:24px;line-height:30px;transform:scaleX(0.9657);">Device Registration Service</span></div>
<div style="left:18px;top:168px;width:388px;height:1104px;overflow:hidden"><span class="t" style="left:126.6px;top:365.2px;font-size:24px;line-height:30px;transform:scaleX(0.9657);">Device Registration Service Tracing</span></div>
<div style="left:18px;top:168px;width:388px;height:1104px;overflow:hidden"><span class="t" style="left:126.6px;top:401.2px;font-size:24px;line-height:30px;transform:scaleX(1.0118);">Forefront Identity Manager</span></div>
<span class="t" style="left:144.6px;top:605.2px;font-size:24px;line-height:30px;transform:scaleX(0.9510);">Hardware Events</span>
<span class="t" style="left:143.7px;top:641.2px;font-size:24px;line-height:30px;transform:scaleX(0.9668);">Internet Explorer</span>
<div style="left:18px;top:168px;width:388px;height:1104px;overflow:hidden"><span class="t" style="left:126.6px;top:509.2px;font-size:24px;line-height:30px;transform:scaleX(0.9811);">Key Management Service</span></div>
<span class="t" style="left:144.6px;top:713.2px;font-size:24px;line-height:30px;transform:scaleX(1.0292);">Microsoft</span>
<div style="left:18px;top:168px;width:388px;height:1104px;overflow:hidden"><span class="t" style="left:126.6px;top:581.2px;font-size:24px;line-height:30px;transform:scaleX(0.9874);">Microsoft Azure AD Sync</span></div>
<div style="left:18px;top:168px;width:388px;height:1104px;overflow:hidden"><span class="t" style="left:126.6px;top:617.2px;font-size:24px;line-height:30px;transform:scaleX(0.9874);">Microsoft Azure AD Sync Tracing</span></div>
<span class="t" style="left:144.6px;top:821.2px;font-size:24px;line-height:30px;transform:scaleX(1.0142);">Microsoft-IE</span>
<span class="t" style="left:144.6px;top:857.2px;font-size:24px;line-height:30px;transform:scaleX(0.9741);">Microsoft-IEDVTOOL</span>
<span class="t" style="left:144.6px;top:893.2px;font-size:24px;line-height:30px;transform:scaleX(0.9709);">Microsoft-IEFRAME</span>
<span class="t" style="left:145.6px;top:929.2px;font-size:24px;line-height:30px;transform:scaleX(0.9755);">Windows Azure</span>
<span class="t" style="left:145.6px;top:965.2px;font-size:24px;line-height:30px;transform:scaleX(0.9697);">Windows PowerShell</span>
<span class="t" style="left:106.8px;top:1001.2px;font-size:24px;line-height:30px;transform:scaleX(0.9184);">Saved Logs</span>
<span class="t" style="left:106.7px;top:1037.2px;font-size:24px;line-height:30px;transform:scaleX(0.9771);">Subscriptions</span>
<span class="t" style="left:430.0px;top:174.7px;font-size:24px;line-height:30px;transform:scaleX(0.9918);color:#fff;font-weight:bold;">Debug</span>
<span class="t" style="left:528.3px;top:174.7px;font-size:24px;line-height:30px;transform:scaleX(0.9396);color:#fff;">Page 1  (Disabled)</span>
<span class="t" style="left:1566.4px;top:236.6px;font-size:24px;line-height:30px;transform:scaleX(0.9402);color:#8a8a8a;"><u>N</u>ext Page</span>
<span class="t" style="left:1776.1px;top:236.6px;font-size:24px;line-height:30px;transform:scaleX(0.9907);"><u>B</u>ack to Top</span>
<span class="t" style="left:476.6px;top:282.9px;font-size:24px;line-height:30px;transform:scaleX(0.9862);">To make this Analytic, Debug or Classic event log easier to navigate and manipulate, first save it in .evtx format by using the &quot;Save All</span>
<span class="t" style="left:438.1px;top:343.0px;font-size:24px;line-height:30px;transform:scaleX(0.9484);">Level</span>
<span class="t" style="left:648.4px;top:343.0px;font-size:24px;line-height:30px;transform:scaleX(0.9809);">Date and Time</span>
<span class="t" style="left:958.0px;top:343.0px;font-size:24px;line-height:30px;transform:scaleX(0.9465);">Source</span>
<span class="t" style="left:1108.4px;top:343.0px;font-size:24px;line-height:30px;transform:scaleX(0.9183);">Event ID</span>
<span class="t" style="left:1218.8px;top:343.0px;font-size:24px;line-height:30px;transform:scaleX(0.9535);">Task Cat...</span>
<span class="t" style="left:469.0px;top:380.9px;font-size:24px;line-height:30px;transform:scaleX(1.0565);">Information</span>
<span class="t" style="left:649.7px;top:380.9px;font-size:24px;line-height:30px;transform:scaleX(0.9457);">1/25/2017 11:56:31 PM</span>
<span class="t" style="left:959.4px;top:380.9px;font-size:24px;line-height:30px;transform:scaleX(0.9101);">AD FS T...</span>
<span class="t" style="left:1171.3px;top:380.9px;font-size:24px;line-height:30px;transform:scaleX(0.8274);">54</span>
<span class="t" style="left:1218.8px;top:380.9px;font-size:24px;line-height:30px;transform:scaleX(0.9942);">None</span>
<span class="t" style="left:469.0px;top:418.9px;font-size:24px;line-height:30px;transform:scaleX(1.0565);">Information</span>
<span class="t" style="left:649.7px;top:418.9px;font-size:24px;line-height:30px;transform:scaleX(0.9457);">1/25/2017 11:56:31 PM</span>
<span class="t" style="left:959.4px;top:418.9px;font-size:24px;line-height:30px;transform:scaleX(0.9101);">AD FS T...</span>
<span class="t" style="left:1171.3px;top:418.9px;font-size:24px;line-height:30px;transform:scaleX(0.8274);">54</span>
<span class="t" style="left:1218.8px;top:418.9px;font-size:24px;line-height:30px;transform:scaleX(0.9942);">None</span>
<span class="t" style="left:469.0px;top:456.9px;font-size:24px;line-height:30px;transform:scaleX(1.0565);">Information</span>
<span class="t" style="left:649.7px;top:456.9px;font-size:24px;line-height:30px;transform:scaleX(0.9457);">1/25/2017 11:56:31 PM</span>
<span class="t" style="left:959.4px;top:456.9px;font-size:24px;line-height:30px;transform:scaleX(0.9101);">AD FS T...</span>
<span class="t" style="left:1159.0px;top:456.9px;font-size:24px;line-height:30px;transform:scaleX(0.8580);">155</span>
<span class="t" style="left:1218.8px;top:456.9px;font-size:24px;line-height:30px;transform:scaleX(0.9942);">None</span>
<span class="t" style="left:469.0px;top:494.9px;font-size:24px;line-height:30px;transform:scaleX(1.0565);">Information</span>
<span class="t" style="left:649.7px;top:494.9px;font-size:24px;line-height:30px;transform:scaleX(0.9457);">1/25/2017 11:56:31 PM</span>
<span class="t" style="left:959.4px;top:494.9px;font-size:24px;line-height:30px;transform:scaleX(0.9101);">AD FS T...</span>
<span class="t" style="left:1159.0px;top:494.9px;font-size:24px;line-height:30px;transform:scaleX(0.8580);">155</span>
<span class="t" style="left:1218.8px;top:494.9px;font-size:24px;line-height:30px;transform:scaleX(0.9942);">None</span>
<div style="left:426px;top:376px;width:1492px;height:174px;overflow:hidden"><span class="t" style="left:43.0px;top:156.9px;font-size:24px;line-height:30px;transform:scaleX(1.0565);">Information</span></div>
<div style="left:426px;top:376px;width:1492px;height:174px;overflow:hidden"><span class="t" style="left:223.7px;top:156.9px;font-size:24px;line-height:30px;transform:scaleX(0.9457);">1/25/2017 11:56:31 PM</span></div>
<div style="left:426px;top:376px;width:1492px;height:174px;overflow:hidden"><span class="t" style="left:533.4px;top:156.9px;font-size:24px;line-height:30px;transform:scaleX(0.9101);">AD FS T...</span></div>
<div style="left:426px;top:376px;width:1492px;height:174px;overflow:hidden"><span class="t" style="left:733.0px;top:156.9px;font-size:24px;line-height:30px;transform:scaleX(0.8580);">155</span></div>
<div style="left:426px;top:376px;width:1492px;height:174px;overflow:hidden"><span class="t" style="left:792.8px;top:156.9px;font-size:24px;line-height:30px;transform:scaleX(0.9942);">None</span></div>
<span class="t" style="left:436.6px;top:571.0px;font-size:24px;line-height:30px;transform:scaleX(0.9355);">Event 54, AD FS Tracing</span>
<span class="t" style="left:456.3px;top:628.6px;font-size:24px;line-height:30px;transform:scaleX(0.9332);">General</span>
<span class="t" style="left:560.7px;top:633.2px;font-size:24px;line-height:30px;transform:scaleX(0.9425);">Details</span>
<span class="t" style="left:476.2px;top:706.8px;font-size:24px;line-height:30px;transform:scaleX(0.9948);">Received request with following properties:</span>
<span class="t" style="left:476.3px;top:766.6px;font-size:24px;line-height:30px;transform:scaleX(0.9320);">2017-01-26 05:56:31 10.0.4.6 GET /adfs/ls/</span>
<span class="t" style="left:918.3px;top:766.6px;font-size:24px;line-height:30px;transform:scaleX(0.9883);">?lc=1033&amp;client-request-id=353c058d-127c-435c-bb26-</span>
<span class="t" style="left:476.2px;top:796.6px;font-size:24px;line-height:30px;transform:scaleX(0.9513);">271dc8353aaf&amp;username=</span>
<span class="t" style="left:1051.8px;top:796.6px;font-size:24px;line-height:30px;transform:scaleX(1.0146);">&amp;wa=wsignin1.0&amp;wtrealm=urn%3afederation%</span>
<span class="t" style="left:477.2px;top:826.6px;font-size:24px;line-height:30px;transform:scaleX(1.0184);">3aMicrosoftOnline&amp;wctx=</span>
<span class="t" style="left:756.9px;top:826.6px;font-size:24px;line-height:30px;transform:scaleX(0.9472);">estsredirect%3d2%26estsrequest%</span>
<span class="t" style="left:477.2px;top:856.6px;font-size:24px;line-height:30px;transform:scaleX(0.9224);">3drQIIAeNisFLOKCkpKLbS1y_</span>
<span class="t" style="left:786.8px;top:856.6px;font-size:24px;line-height:30px;transform:scaleX(0.9362);">ILypJzNHLT0vLTE7VS87P1csvSs9MAbGKhLgEelltTGuEYpx3q6nLnjC1Wr-</span>
<div style="left:474px;top:704px;width:1358px;height:206px;overflow:hidden"><span class="t" style="left:2.3px;top:182.6px;font-size:24px;line-height:30px;transform:scaleX(0.9363);">KUO2nTv2cxLvUzLx0vcTigooLilxdTCvGBsbGm5hYfZ19nTxPME04K3eLSdC_</span></div>
<div style="left:474px;top:704px;width:1358px;height:206px;overflow:hidden"><span class="t" style="left:788.2px;top:182.6px;font-size:24px;line-height:30px;transform:scaleX(0.9046);">KN0zJbzYLTUItSixJDM</span></div>
<span class="t" style="left:466.1px;top:945.1px;font-size:24px;line-height:30px;transform:scaleX(0.9849);">Log Na<u>m</u>e:</span>
<span class="t" style="left:681.5px;top:945.1px;font-size:24px;line-height:30px;transform:scaleX(0.9702);">AD FS Tracing/Debug</span>
<span class="t" style="left:466.2px;top:987.1px;font-size:24px;line-height:30px;transform:scaleX(0.9345);"><u>S</u>ource:</span>
<span class="t" style="left:681.5px;top:987.1px;font-size:24px;line-height:30px;transform:scaleX(0.9360);">AD FS Tracing</span>
<span class="t" style="left:466.2px;top:1029.1px;font-size:24px;line-height:30px;transform:scaleX(0.9257);"><u>E</u>vent ID:</span>
<span class="t" style="left:681.5px;top:1029.1px;font-size:24px;line-height:30px;transform:scaleX(0.8274);">54</span>
<span class="t" style="left:466.2px;top:1071.1px;font-size:24px;line-height:30px;transform:scaleX(0.9238);"><u>L</u>evel:</span>
<span class="t" style="left:679.4px;top:1071.1px;font-size:24px;line-height:30px;transform:scaleX(1.0547);">Information</span>
<span class="t" style="left:466.2px;top:1113.1px;font-size:24px;line-height:30px;transform:scaleX(0.8908);"><u>U</u>ser:</span>
<span class="t" style="left:681.5px;top:1113.1px;font-size:24px;line-height:30px;transform:scaleX(0.9007);">JACKSTROMBERG\svc_adfs</span>
<span class="t" style="left:466.1px;top:1155.1px;font-size:24px;line-height:30px;transform:scaleX(0.9776);"><u>O</u>pCode:</span>
<span class="t" style="left:679.4px;top:1155.1px;font-size:24px;line-height:30px;transform:scaleX(1.0509);">Info</span>
<span class="t" style="left:466.1px;top:1197.1px;font-size:24px;line-height:30px;transform:scaleX(1.0312);">More <u>I</u>nformation:</span>
<span class="t" style="left:686.1px;top:1197.1px;font-size:24px;line-height:30px;transform:scaleX(0.9811);color:#0000ff;text-decoration:underline;">Event Log Online Help</span>
<span class="t" style="left:996.6px;top:987.1px;font-size:24px;line-height:30px;transform:scaleX(0.9835);">Logge<u>d</u>:</span>
<span class="t" style="left:1172.1px;top:987.1px;font-size:24px;line-height:30px;transform:scaleX(0.9530);">1/25/2017 11:56:31 PM</span>
<span class="t" style="left:997.6px;top:1029.1px;font-size:24px;line-height:30px;transform:scaleX(0.9647);">Task Categor<u>y</u>:</span>
<span class="t" style="left:1172.1px;top:1029.1px;font-size:24px;line-height:30px;transform:scaleX(1.0120);">None</span>
<span class="t" style="left:996.6px;top:1071.1px;font-size:24px;line-height:30px;transform:scaleX(0.9582);"><u>K</u>eywords:</span>
<span class="t" style="left:1173.1px;top:1071.1px;font-size:24px;line-height:30px;transform:scaleX(0.8443);">ADFSSTS</span>
<span class="t" style="left:996.6px;top:1113.1px;font-size:24px;line-height:30px;transform:scaleX(1.0094);">Compute<u>r</u>:</span>
<span class="t" style="left:1173.1px;top:1113.1px;font-size:24px;line-height:30px;transform:scaleX(0.9654);">ADFS01.jackstromberg.local</span>
</body></html>
